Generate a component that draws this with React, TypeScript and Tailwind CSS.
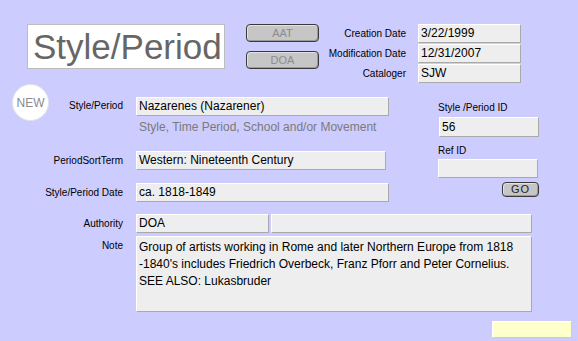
import React from 'react';

const font = "font-['Liberation_Sans',Arial,sans-serif]";

const Field: React.FC<{ className?: string; children?: React.ReactNode }> = ({ className = '', children }) => (
    <div className={`bg-[#eeeeee] border border-t-white border-l-white border-r-[#a9a9a9] border-b-[#a9a9a9] text-[12px] leading-[17px] text-black pl-[2px] whitespace-nowrap overflow-hidden ${className}`}>
        {children}
    </div>
);

const Label: React.FC<{ children: React.ReactNode; className?: string }> = ({ children, className = '' }) => (
    <div className={`text-[10px] leading-[12px] text-black whitespace-nowrap ${className}`}>{children}</div>
);

// label column ends at x=123, fields begin at x=136
const Row: React.FC<{ label: string; className?: string; children: React.ReactNode }> = ({ label, className = '', children }) => (
    <div className={`flex items-center ${className}`}>
        <Label className="w-[123px] text-right">{label}</Label>
        <div className="ml-[13px] flex gap-[2px]">{children}</div>
    </div>
);

const MacButton: React.FC<{ label: string; className?: string; textClass?: string }> = ({ label, className = '', textClass = '' }) => (
    <div className={`flex items-center justify-center rounded-[4px] border border-[#3a3a3a] bg-[#c6c6c6] shadow-[inset_1px_1px_0_#e2e2e2,inset_-1px_-1px_0_#9a9a9a] ${className}`}>
        <span className={textClass}>{label}</span>
    </div>
);

export default function App() {
    return (
        <div className={`w-[578px] h-[341px] bg-[#ccccff] overflow-hidden ${font}`}>
            {/* header */}
            <div className="flex items-start pt-[24px]">
                <div className="ml-[27px] w-[198px] h-[45px] bg-white border border-[#bdbdbd] text-[35px] leading-[42px] text-[#666666] pl-[5px] pt-px">
                    Style/Period
                </div>
                <div className="ml-[21px] w-[73px] flex flex-col gap-[9px]">
                    <MacButton label="AAT" className="h-[18px]" textClass="text-[11px] text-[#8c8c8c]" />
                    <MacButton label="DOA" className="h-[18px]" textClass="text-[11px] text-[#8c8c8c]" />
                </div>
                <div className="flex flex-col gap-px">
                    {[
                        ['Creation Date', '3/22/1999'],
                        ['Modification Date', '12/31/2007'],
                        ['Cataloger', 'SJW'],
                    ].map(([l, v]) => (
                        <div key={l} className="flex items-center">
                            <Label className="w-[87px] text-right">{l}</Label>
                            <Field className="ml-[12px] w-[103px] h-[19px]">{v}</Field>
                        </div>
                    ))}
                </div>
            </div>

            {/* middle */}
            <div className="flex mt-px">
                <div className="w-[389px]">
                    <div className="flex items-start h-[37px]">
                        <div className="w-[123px] flex items-start">
                            <div className="ml-[12px] w-[37px] h-[37px] rounded-full bg-white border border-[#e4e4e4] flex items-center justify-center text-[12px] text-[#8a8a8a]">
                                NEW
                            </div>
                            <Label className="ml-auto mt-[16px]">Style/Period</Label>
                        </div>
                        <Field className="ml-[13px] mt-[13px] w-[253px] h-[19px]">Nazarenes (Nazarener)</Field>
                    </div>
                    <div className="-mt-px ml-[139px] h-[14px] text-[12px] leading-[14px] text-[#7a7a7a] whitespace-nowrap">
                        Style, Time Period, School and/or Movement
                    </div>
                    <Row label="PeriodSortTerm" className="mt-[17px]">
                        <Field className="w-[250px] h-[19px]">Western: Nineteenth Century</Field>
                    </Row>
                    <Row label="Style/Period Date" className="mt-[13px]">
                        <Field className="w-[253px] h-[19px]">ca. 1818-1849</Field>
                    </Row>
                </div>
                <div className="ml-[49px] flex flex-col">
                    <Label className="mt-[18px]">Style /Period ID</Label>
                    <Field className="mt-[3px] ml-px w-[100px] h-[20px] leading-[18px]">56</Field>
                    <Label className="mt-[8px]">Ref ID</Label>
                    <Field className="mt-[2px] w-[100px] h-[19px]" />
                    <MacButton label="GO" className="mt-[4px] ml-[64px] w-[37px] h-[15px]" textClass="text-[11px] leading-[11px] tracking-[1px] text-[#222222]" />
                </div>
            </div>

            {/* bottom */}
            <Row label="Authority" className="mt-[12px]">
                <Field className="w-[133px] h-[19px]">DOA</Field>
                <Field className="w-[261px] h-[19px]" />
            </Row>
            <div className="flex items-start mt-[3px]">
                <Label className="w-[123px] text-right mt-[4px]">Note</Label>
                <Field className="ml-[13px] w-[396px] h-[76px] leading-[14.3px] pt-[2px] whitespace-normal">
                    Group of artists working in Rome and later Northern Europe from 1818
                    <br />
                    -1840's includes Friedrich Overbeck, Franz Pforr and Peter Cornelius.
                    <br />
                    SEE ALSO: Lukasbruder
                </Field>
            </div>
            <div className="mt-[9px] ml-[492px] w-[80px] h-[17px] bg-[#ffffcc] border border-t-white border-l-white border-r-[#d0d0b0] border-b-[#d0d0b0]" />
        </div>
    );
}
